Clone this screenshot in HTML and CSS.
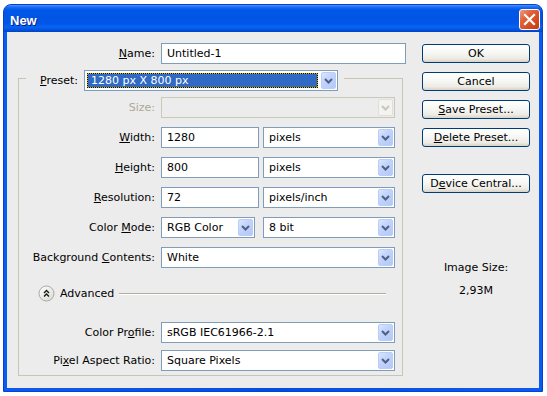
FILE: index.html
```html
<!DOCTYPE html>
<html>
<head>
<meta charset="utf-8">
<title>New</title>
<link rel="stylesheet" href="styles.css">
</head>
<body>
<div class="window">
  <div class="titlebar">
    <span class="title">New</span>
    <span class="close"><svg width="19" height="19" viewBox="0 0 19 19"><path d="M5 5L14 14M14 5L5 14" stroke="#fff" stroke-width="2.2" stroke-linecap="square"/></svg></span>
  </div>
  <div class="client">
    <div class="leftcol">
      <div class="name-row">
        <label class="lbl name-lbl"><u>N</u>ame:</label>
        <div class="field name-field">Untitled-1</div>
      </div>
      <div class="group">
        <div class="group-head">
          <label class="head-lbl"><u>P</u>reset:</label>
          <div class="combo preset-combo">
            <span class="focus"><span class="sel">1280 px X 800 px</span></span>
            <span class="arrow"><svg width="9" height="6" viewBox="0 0 9 6"><path d="M1 1L4.5 4.5L8 1" fill="none" stroke="#4d6185" stroke-width="2"/></svg></span>
          </div>
        </div>

        <div class="frow first">
          <label class="lbl disabled">Size:</label>
          <div class="combo ctrl w-full disabled-combo">
            <span class="ctext"></span>
            <span class="arrow"><svg width="9" height="6" viewBox="0 0 9 6"><path d="M1 1L4.5 4.5L8 1" fill="none" stroke="#c9c7ba" stroke-width="2"/></svg></span>
          </div>
        </div>

        <div class="frow">
          <label class="lbl"><u>W</u>idth:</label>
          <div class="field ctrl w-num">1280</div>
          <div class="combo w-unit">
            <span class="ctext">pixels</span>
            <span class="arrow"><svg width="9" height="6" viewBox="0 0 9 6"><path d="M1 1L4.5 4.5L8 1" fill="none" stroke="#4d6185" stroke-width="2"/></svg></span>
          </div>
        </div>

        <div class="frow">
          <label class="lbl"><u>H</u>eight:</label>
          <div class="field ctrl w-num">800</div>
          <div class="combo w-unit">
            <span class="ctext">pixels</span>
            <span class="arrow"><svg width="9" height="6" viewBox="0 0 9 6"><path d="M1 1L4.5 4.5L8 1" fill="none" stroke="#4d6185" stroke-width="2"/></svg></span>
          </div>
        </div>

        <div class="frow">
          <label class="lbl"><u>R</u>esolution:</label>
          <div class="field ctrl w-num">72</div>
          <div class="combo w-unit">
            <span class="ctext">pixels/inch</span>
            <span class="arrow"><svg width="9" height="6" viewBox="0 0 9 6"><path d="M1 1L4.5 4.5L8 1" fill="none" stroke="#4d6185" stroke-width="2"/></svg></span>
          </div>
        </div>

        <div class="frow">
          <label class="lbl">Color <u>M</u>ode:</label>
          <div class="combo ctrl w-mode">
            <span class="ctext">RGB Color</span>
            <span class="arrow"><svg width="9" height="6" viewBox="0 0 9 6"><path d="M1 1L4.5 4.5L8 1" fill="none" stroke="#4d6185" stroke-width="2"/></svg></span>
          </div>
          <div class="combo w-unit w-bit">
            <span class="ctext">8 bit</span>
            <span class="arrow"><svg width="9" height="6" viewBox="0 0 9 6"><path d="M1 1L4.5 4.5L8 1" fill="none" stroke="#4d6185" stroke-width="2"/></svg></span>
          </div>
        </div>

        <div class="frow">
          <label class="lbl">Background <u>C</u>ontents:</label>
          <div class="combo ctrl w-full">
            <span class="ctext">White</span>
            <span class="arrow"><svg width="9" height="6" viewBox="0 0 9 6"><path d="M1 1L4.5 4.5L8 1" fill="none" stroke="#4d6185" stroke-width="2"/></svg></span>
          </div>
        </div>

        <div class="adv-row">
          <svg class="adv-btn" width="17" height="17" viewBox="0 0 17 17">
            <defs>
              <linearGradient id="advg" x1="0" y1="0" x2="1" y2="1">
                <stop offset="0" stop-color="#ffffff"/>
                <stop offset="1" stop-color="#d8d8d4"/>
              </linearGradient>
            </defs>
            <circle cx="8.5" cy="8.5" r="7.5" fill="url(#advg)" stroke="#a9a9a4" stroke-width="1"/>
            <path d="M6 8L8.5 5.5L11 8M6 11.5L8.5 9L11 11.5" fill="none" stroke="#1a1a1a" stroke-width="1.4"/>
          </svg>
          <span class="adv-text">Advanced</span>
          <span class="adv-line"></span>
        </div>

        <div class="frow profile-row">
          <label class="lbl">Color Pr<u>o</u>file:</label>
          <div class="combo ctrl w-full">
            <span class="ctext">sRGB IEC61966-2.1</span>
            <span class="arrow"><svg width="9" height="6" viewBox="0 0 9 6"><path d="M1 1L4.5 4.5L8 1" fill="none" stroke="#4d6185" stroke-width="2"/></svg></span>
          </div>
        </div>

        <div class="frow pixel-row">
          <label class="lbl">Pi<u>x</u>el Aspect Ratio:</label>
          <div class="combo ctrl w-full">
            <span class="ctext">Square Pixels</span>
            <span class="arrow"><svg width="9" height="6" viewBox="0 0 9 6"><path d="M1 1L4.5 4.5L8 1" fill="none" stroke="#4d6185" stroke-width="2"/></svg></span>
          </div>
        </div>
      </div>
    </div>

    <div class="rightcol">
      <div class="btn">OK</div>
      <div class="btn">Cancel</div>
      <div class="btn"><span><u>S</u>ave Preset...</span></div>
      <div class="btn"><span><u>D</u>elete Preset...</span></div>
      <div class="btn device"><span>D<u>e</u>vice Central...</span></div>
      <div class="imgsize">Image Size:</div>
      <div class="imgsize-val">2,93M</div>
    </div>
  </div>
</div>
</body>
</html>
```
FILE: styles.css
```css
* { box-sizing: border-box; }

body {
  margin: 0;
  background: #ffffff;
  font-family: "DejaVu Sans", "Liberation Sans", sans-serif;
  font-size: 11px;
  color: #000;
}

.window {
  width: 540px;
  height: 388px;
  margin: 4px 0 0 3px;
  border: 1px solid #0a3fd0;
  border-radius: 8px 8px 0 0;
  background: linear-gradient(to right, #0a5cf0, #0050e0 50%, #0a5cf0);
  padding: 0 3px 3px;
  display: flex;
  flex-direction: column;
}

.titlebar {
  height: 27px;
  margin: 0 -3px;
  padding: 0 2px 0 6px;
  display: flex;
  justify-content: space-between;
  align-items: flex-start;
  border-radius: 7px 7px 0 0;
  background: linear-gradient(to bottom,
    #4a9bff 0px, #1a6cf2 2px, #0058e8 5px, #0055e5 12px,
    #0056e6 18px, #0a63f2 22px, #0052de 25px, #0042c0 27px);
}

.title {
  margin-top: 8px;
  font-family: "Liberation Sans", "DejaVu Sans", sans-serif;
  font-weight: bold;
  font-size: 13px;
  line-height: 15px;
  color: #fff;
  text-shadow: 1px 1px 0 #0a1a80;
}

.close {
  width: 21px;
  height: 21px;
  margin-top: 4px;
  border: 1px solid #ffffff;
  border-radius: 3px;
  background: linear-gradient(135deg, #f09a7c 0%, #e2613a 35%, #d44a20 70%, #c23a14 100%);
  display: flex;
}

.client {
  flex: 1;
  background: #ececec;
  display: flex;
  padding-top: 11px;
}

.leftcol {
  width: 399px;
  flex: none;
}

.rightcol {
  width: 108px;
  margin-left: 16px;
  padding-top: 1px;
  display: flex;
  flex-direction: column;
}

.name-row {
  display: flex;
  align-items: center;
  height: 21px;
}

.lbl {
  flex: none;
  text-align: right;
  white-space: nowrap;
}

.name-lbl { width: 148px; }

.disabled { color: #aca899; }

.field {
  height: 21px;
  border: 1px solid #7f9db9;
  background: #ffffff;
  padding-left: 5px;
  line-height: 19px;
  white-space: nowrap;
}

.name-field {
  width: 245px;
  margin-left: 6px;
}

.group {
  margin: 14px 0 0 11px;
  width: 385px;
  height: 298px;
  border: 1px solid #c8c5b6;
}

.group-head {
  display: flex;
  align-items: center;
  width: max-content;
  height: 21px;
  margin: -9px 0 0 7px;
  padding: 0 6px 0 14px;
  background: #ececec;
}

.head-lbl { margin-right: 6px; }

.combo {
  height: 21px;
  border: 1px solid #7f9db9;
  background: #ffffff;
  display: flex;
  align-items: stretch;
}

.ctext {
  flex: 1;
  padding-left: 5px;
  line-height: 19px;
  white-space: nowrap;
  overflow: hidden;
}

.arrow {
  flex: none;
  width: 15px;
  margin: 1px 1px 1px 0;
  border: 1px solid #b9cdf9;
  border-radius: 2px;
  background: linear-gradient(135deg, #dbe5fe 0%, #c3d4fc 40%, #b4c8f6 100%);
  display: flex;
  align-items: center;
  justify-content: center;
}

.disabled-combo {
  border-color: #cac8bb;
  background: #ececec;
}

.disabled-combo .arrow {
  border-color: #e2e0d6;
  background: #f3f3ef;
}

.preset-combo { width: 254px; }

.focus {
  flex: 1;
  margin: 2px 3px 2px 2px;
  background: #e0b400;
  display: flex;
}

.sel {
  flex: 1;
  border: 1px dotted #111;
  background: #316ac5;
  background-clip: padding-box;
  color: #fff;
  padding-left: 3px;
  line-height: 13px;
  white-space: nowrap;
}

.frow {
  display: flex;
  align-items: center;
  height: 21px;
  margin-top: 9px;
}

.frow.first { margin-top: 6px; }
.frow.profile-row { margin-top: 20px; }
.frow.pixel-row { margin-top: 7px; }

.frow .lbl { width: 136px; }

.ctrl { margin-left: 6px; }

.w-full { width: 234px; }
.w-num { width: 98px; }
.w-unit { width: 132px; margin-left: 4px; }
.w-mode { width: 94px; }
.w-bit { margin-left: 8px; }

.adv-row {
  display: flex;
  align-items: center;
  height: 17px;
  margin-top: 17px;
  padding-left: 19px;
  padding-right: 16px;
}

.adv-btn { flex: none; display: block; }

.adv-text {
  margin-left: 5px;
  white-space: nowrap;
}

.adv-line {
  flex: 1;
  margin-left: 5px;
  height: 2px;
  border-top: 1px solid #b0aea2;
  border-bottom: 1px solid #ffffff;
}

.btn {
  height: 19px;
  margin-bottom: 9px;
  border: 1px solid #003c74;
  border-radius: 3px;
  background: linear-gradient(to bottom, #ffffff 0%, #f7f7f4 45%, #ecebe5 80%, #d8d3c8 100%);
  display: flex;
  align-items: center;
  justify-content: center;
  white-space: nowrap;
  line-height: 15px;
}

.btn.device { margin-top: 18px; }

.imgsize {
  margin-top: 58px;
  line-height: 16px;
  text-align: center;
}

.imgsize-val {
  margin-top: 7px;
  line-height: 16px;
  text-align: center;
}
```
